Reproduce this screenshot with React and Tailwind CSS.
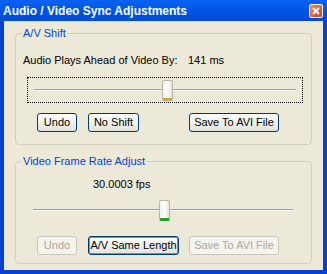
import React from 'react';

const font = { fontFamily: '"Liberation Sans", Arial, sans-serif' };

const Button = ({ children, width, disabled, focused }) => (
  <div
    className={`h-[19px] flex items-center justify-center whitespace-nowrap rounded-[3px] border text-[11px] leading-none ${width} ${
      disabled
        ? 'border-[#C9C7BA] text-[#ACA899] bg-[#F4F3EE]'
        : focused
        ? 'border-[#003C74] text-black bg-gradient-to-b from-[#FFFFFF] to-[#E3E3DB] shadow-[inset_0_0_0_1px_#6A8ED6]'
        : 'border-[#003C74] text-black bg-gradient-to-b from-[#FFFFFF] to-[#E3E3DB]'
    }`}
  >
    {children}
  </div>
);

const Thumb = ({ green }) => (
  <div
    className={`w-[11px] h-[21px] rounded-[2px] bg-gradient-to-r from-[#F3F3EF] via-[#FFFFFF] to-[#E2E2DA] border border-[#B6B5A6] ${
      green ? 'border-b-[3px] border-b-[#21A121]' : 'border-b-[3px] border-b-[#C9A64C]'
    }`}
  />
);

const Track = ({ left, green }) => (
  <div className="relative h-[21px] flex items-center">
    <div className="w-full h-[3px] border-t border-[#9D9C99] bg-white border-b border-b-[#E8E7E0]" />
    <div className="absolute top-0" style={{ left }}>
      <Thumb green={green} />
    </div>
  </div>
);

const Group = ({ title, children, height }) => (
  <div className={`relative mx-[11px] ${height} border border-[#D0D0BF] rounded-[4px]`}>
    <span className="absolute -top-[8px] left-[6px] px-[1px] bg-[#ECE9D8] text-[#0046D5] text-[11px] leading-[14px] whitespace-nowrap">
      {title}
    </span>
    {children}
  </div>
);

export default function App() {
  return (
    <div className="w-[327px] h-[274px] bg-[#0841D0] flex flex-col" style={font}>
      <div className="h-[21px] flex items-center justify-between pl-[3px] pr-[4px] bg-gradient-to-b from-[#0A62F4] via-[#0055E5] to-[#0049D8]">
        <span className="text-white font-bold text-[12px] whitespace-nowrap">
          Audio / Video Sync Adjustments
        </span>
        <div className="w-[14px] h-[14px] rounded-[2px] border border-white bg-gradient-to-br from-[#F08A6A] to-[#C94220] flex items-center justify-center">
          <svg width="8" height="8" viewBox="0 0 8 8">
            <path d="M1 1L7 7M7 1L1 7" stroke="white" strokeWidth="1.8" />
          </svg>
        </div>
      </div>
      <div className="flex-1 mx-[4px] mb-[4px] bg-[#ECE9D8] pt-[12px] flex flex-col">
        <Group title="A/V Shift" height="h-[112px]">
          <div className="flex pt-[19px] pl-[7px] text-[11px] leading-[14px] text-black whitespace-nowrap">
            <span className="w-[165px]">Audio Plays Ahead of Video By:</span>
            <span>141 ms</span>
          </div>
          <div className="mt-[10px] ml-[11px] w-[276px] h-[26px] border border-dotted border-black px-[6px] pt-[2px]">
            <Track left={128} />
          </div>
          <div className="flex mt-[10px] ml-[21px]">
            <Button width="w-[40px]">Undo</Button>
            <div className="w-[11px]" />
            <Button width="w-[51px]">No Shift</Button>
            <div className="w-[50px]" />
            <Button width="w-[90px]">Save To AVI File</Button>
          </div>
        </Group>
        <div className="h-[16px]" />
        <Group title="Video Frame Rate Adjust" height="h-[103px]">
          <div className="pt-[15px] pl-[77px] text-[11px] leading-[14px] text-black">30.0003 fps</div>
          <div className="mt-[9px] ml-[17px] w-[260px]">
            <Track left={126} green />
          </div>
          <div className="flex mt-[15px] ml-[21px]">
            <Button width="w-[40px]" disabled>Undo</Button>
            <div className="w-[11px]" />
            <Button width="w-[91px]" focused>A/V Same Length</Button>
            <div className="w-[10px]" />
            <Button width="w-[90px]" disabled>Save To AVI File</Button>
          </div>
        </Group>
      </div>
    </div>
  );
}
